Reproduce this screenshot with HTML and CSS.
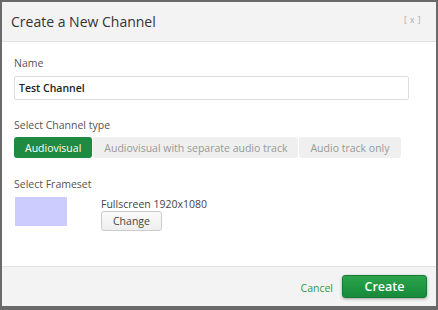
FILE: index.html
```html
<!DOCTYPE html>
<html lang="en">
    <head>
        <meta charset="UTF-8">
        <meta name="viewport" content="width=device-width, initial-scale=1.0">
        <title>Create a New Channel</title>
        <link rel="stylesheet" href="styles.css">
    </head>

    <body>
        <div class="modal">
            <header class="modal-header">
                <h2 class="title">Create a New Channel</h2>
                <span class="icon-close">[ x ]</span>
            </header>

            <form class="modal-body" action="#">
                <div class="field">
                    <label>Name</label>
                    <input type="text" value="Test Channel">
                </div>
                <div class="field type">
                    <label>Select Channel type</label>
                    <div class="segmented">
                        <button type="button" class="seg active">Audiovisual</button>
                        <button type="button" class="seg">Audiovisual with separate audio track</button>
                        <button type="button" class="seg">Audio track only</button>
                    </div>
                </div>
                <div class="field">
                    <label>Select Frameset</label>
                    <div class="frameset">
                        <div class="preview"></div>
                        <div class="frameset-info">
                            <span>Fullscreen 1920x1080</span>
                            <button type="button" class="btn-change">Change</button>
                        </div>
                    </div>
                </div>
            </form>

            <footer class="modal-footer">
                <a href="#" class="cancel">Cancel</a>
                <button type="submit" class="btn-create">Create</button>
            </footer>
        </div>
    </body>

</html>
```

FILE: styles.css
```css
* {
    margin: 0;
    padding: 0;
    box-sizing: border-box;
    font-family: 'Open Sans', sans-serif;
}

body {
    width: 438px;
    height: 310px;
    padding: 2px 2px 4px;
    background: #6a6a6a;
    overflow: hidden;
}

.modal {
    height: 304px;
    background: white;
    display: flex;
    flex-direction: column;
}

.modal-header {
    height: 40px;
    padding: 0 15px 0 9px;
    background: #f3f3f3;
    border-bottom: 1px solid #e3e3e3;
    display: flex;
    justify-content: space-between;
    align-items: center;
}

.title {
    font-size: 14px;
    font-weight: normal;
    color: #333;
    padding-bottom: 1px;
}

.icon-close {
    font-size: 8.5px;
    color: #aaa;
    margin-bottom: 5px;
    letter-spacing: 0.5px;
}

.modal-body {
    flex: 1;
    padding: 12px 12px 0;
}

.field {
    margin-bottom: 16px;

    &.type {
        margin-bottom: 17px;
    }

    & > label {
        display: block;
        font-size: 10.5px;
        line-height: 18px;
        color: #555;
        margin-bottom: 3px;
    }

    & input {
        width: 395px;
        height: 24px;
        border: 1px solid #ddd;
        border-radius: 2px;
        padding: 0 4px;
        font-size: 10.5px;
        font-weight: 600;
        color: #222;
        outline: none;
    }
}

.segmented {
    display: flex;
    gap: 1px;

    .seg {
        height: 21px;
        padding: 0 11px;
        border: none;
        border-radius: 3px;
        background: #efefef;
        color: #999;
        font-size: 10.5px;
        white-space: nowrap;
    }

    .seg.active {
        background: #1f8a41;
        color: white;
    }
}

.frameset {
    display: flex;
    align-items: flex-start;
    padding-top: 1px;

    .preview {
        width: 52px;
        height: 29px;
        margin-left: 1px;
        background: #ccccff;
    }

    .frameset-info {
        margin-left: 34px;
        display: flex;
        flex-direction: column;
        align-items: flex-start;
        font-size: 10.5px;
        color: #444;
        line-height: 14px;
    }

    .btn-change {
        height: 20px;
        padding: 0 11px;
        border: 1px solid #ccc;
        border-radius: 3px;
        background: linear-gradient(#fafafa, #eee);
        font-size: 10.5px;
        color: #444;
    }
}

.modal-footer {
    height: 40px;
    background: #f3f3f3;
    border-top: 1px solid #e3e3e3;
    display: flex;
    justify-content: flex-end;
    align-items: center;
    padding-right: 9px;

    .cancel {
        color: #2b9a4b;
        font-size: 10.5px;
        text-decoration: none;
        margin-right: 9px;
        margin-top: 3px;
    }

    .btn-create {
        width: 85px;
        height: 23px;
        border: 1px solid #167a34;
        border-radius: 3px;
        background: linear-gradient(#2aa54c, #178a3b);
        box-shadow: 0 1px 3px rgba(0, 0, 0, 0.35);
        color: white;
        font-size: 12.5px;
        font-weight: 600;
    }
}
```
